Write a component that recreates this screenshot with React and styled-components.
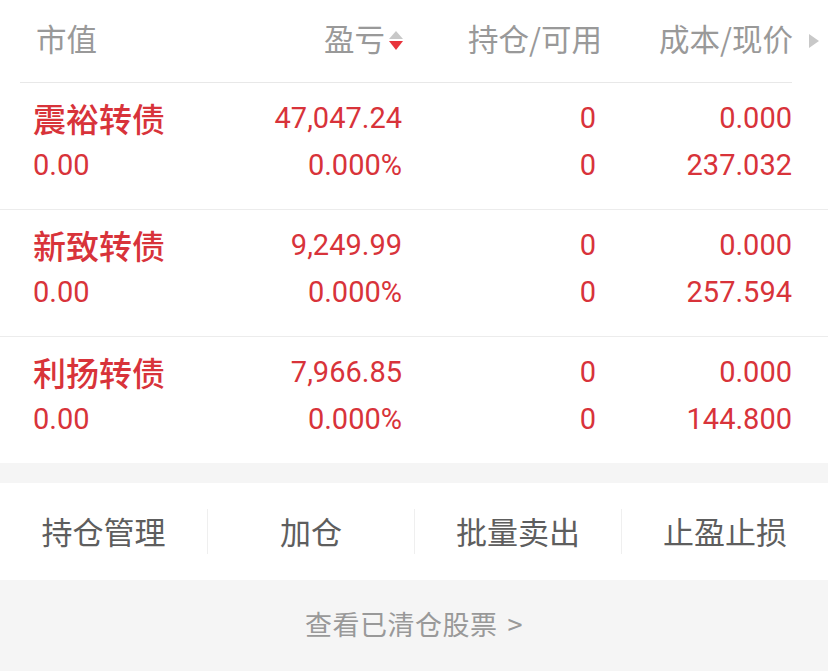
import React from "react";
import styled, { createGlobalStyle } from "styled-components";

const Global = createGlobalStyle`
  html, body { margin: 0; padding: 0; background: #ffffff; }
  body { font-family: Roboto, "Noto Sans CJK SC", sans-serif; }
`;

const RED = "#d8333a";

const Page = styled.div`
  width: 828px;
  height: 671px;
  background: #f5f5f5;
  display: flex;
  flex-direction: column;
  overflow: hidden;
`;

const Card = styled.div`
  background: #fff;
`;

const HeaderRow = styled.div`
  height: 83px;
  margin: 0 36px 0 20px;
  border-bottom: 1px solid #e8e8e8;
  box-sizing: border-box;
  display: grid;
  grid-template-columns: 183px 184px 198px 1fr;
  align-items: center;
  padding: 0 0 5px 16px;
  font-family: "Noto Sans CJK SC", sans-serif;
  font-size: 30.5px;
  color: #999;
`;

const HeadCell = styled.div`
  display: flex;
  align-items: center;
  justify-content: ${(p) => (p.$left ? "flex-start" : "flex-end")};
  position: relative;
  line-height: 1;
  white-space: nowrap;
  margin-right: ${(p) => (p.$shift ? `${p.$shift}px` : "0")};
`;

const SortIcon = styled.span`
  display: inline-flex;
  flex-direction: column;
  gap: 2px;
  margin-left: 4px;
  margin-top: 4px;
`;

const Tri = styled.span`
  width: 0;
  height: 0;
  border-left: 7px solid transparent;
  border-right: 7px solid transparent;
  ${(p) =>
    p.$up
      ? `border-bottom: 8px solid ${p.$color};`
      : `border-top: 9px solid ${p.$color};`}
`;

const MoreArrow = styled.span`
  position: absolute;
  right: -26px;
  top: 50%;
  margin-top: -5px;
  width: 0;
  height: 0;
  border-top: 7px solid transparent;
  border-bottom: 7px solid transparent;
  border-left: 10px solid #c8c8c8;
`;

const Row = styled.div`
  height: ${(p) => (p.$last ? "126px" : "127px")};
  box-sizing: border-box;
  border-bottom: ${(p) => (p.$last ? "none" : "1px solid #ececec")};
  display: grid;
  grid-template-columns: 187px 182px 194px 1fr;
  grid-template-rows: 47px 47px;
  align-content: center;
  padding: 0 36px 8px 33px;
  color: ${RED};
`;

const Name = styled.div`
  font-family: "Noto Sans CJK SC", sans-serif;
  font-size: 33px;
  font-weight: 500;
  line-height: 1;
  white-space: nowrap;
  display: flex;
  align-items: center;
`;

const Num = styled.div`
  font-family: Roboto, sans-serif;
  font-size: 29px;
  line-height: 1;
  display: flex;
  align-items: center;
  justify-content: ${(p) => (p.$left ? "flex-start" : "flex-end")};
  white-space: nowrap;
`;

const Gap = styled.div`
  height: 20px;
  background: #f5f5f5;
`;

const ActionBar = styled.div`
  height: 97px;
  background: #fff;
  display: grid;
  grid-template-columns: repeat(4, 1fr);
  align-items: center;
`;

const Action = styled.div`
  height: 42px;
  display: flex;
  align-items: center;
  justify-content: center;
  font-family: "Noto Sans CJK SC", sans-serif;
  font-size: 31px;
  color: #5e5e5e;
  border-left: ${(p) => (p.$first ? "none" : "1px solid #efefef")};
  padding-bottom: 3px;
`;

const Footer = styled.div`
  flex: 1;
  display: flex;
  justify-content: center;
  align-items: center;
  padding-bottom: 4px;
  font-family: "Noto Sans CJK SC", sans-serif;
  font-size: 27px;
  color: #999;
  letter-spacing: 0.5px;
`;

const Chevron = styled.span`
  margin-left: 10px;
`;

const rows = [
  { name: "震裕转债", pl: "47,047.24", mv: "0.00", pct: "0.000%", cost: "0.000", price: "237.032" },
  { name: "新致转债", pl: "9,249.99", mv: "0.00", pct: "0.000%", cost: "0.000", price: "257.594" },
  { name: "利扬转债", pl: "7,966.85", mv: "0.00", pct: "0.000%", cost: "0.000", price: "144.800" },
];

export default function App() {
  return (
    <Page>
      <Global />
      <Card>
        <HeaderRow>
          <HeadCell $left>市值</HeadCell>
          <HeadCell>
            盈亏
            <SortIcon>
              <Tri $up $color="#c8c8c8" />
              <Tri $color="#e8343c" />
            </SortIcon>
          </HeadCell>
          <HeadCell $shift={-1}>持仓/可用</HeadCell>
          <HeadCell $shift={-1}>
            成本/现价
            <MoreArrow />
          </HeadCell>
        </HeaderRow>
        {rows.map((r, i) => (
          <Row key={r.name} $last={i === rows.length - 1}>
            <Name>{r.name}</Name>
            <Num>{r.pl}</Num>
            <Num>0</Num>
            <Num>{r.cost}</Num>
            <Num $left>{r.mv}</Num>
            <Num>{r.pct}</Num>
            <Num>0</Num>
            <Num>{r.price}</Num>
          </Row>
        ))}
      </Card>
      <Gap />
      <ActionBar>
        <Action $first>持仓管理</Action>
        <Action>加仓</Action>
        <Action>批量卖出</Action>
        <Action>止盈止损</Action>
      </ActionBar>
      <Footer>
        查看已清仓股票<Chevron>&gt;</Chevron>
      </Footer>
    </Page>
  );
}
